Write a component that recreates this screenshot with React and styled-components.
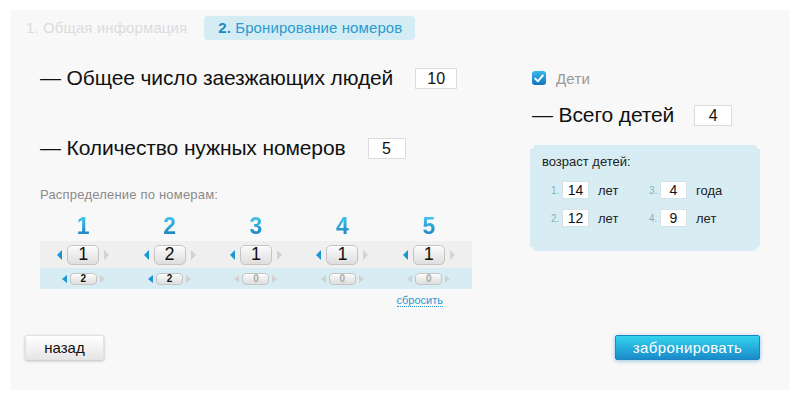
import React from 'react';
import styled, { createGlobalStyle } from 'styled-components';

const GlobalStyle = createGlobalStyle`
    body {
        margin: 0;
        background: #ffffff;
        font-family: "Liberation Sans", Arial, sans-serif;
    }
`;

const rooms = [
    { adults: 1, kids: 2, kidsOn: true },
    { adults: 2, kids: 2, kidsOn: true },
    { adults: 1, kids: 0, kidsOn: false },
    { adults: 1, kids: 0, kidsOn: false },
    { adults: 1, kids: 0, kidsOn: false },
];

const ages = [
    { n: 1, age: 14, word: 'лет' },
    { n: 3, age: 4, word: 'года' },
    { n: 2, age: 12, word: 'лет' },
    { n: 4, age: 9, word: 'лет' },
];

const Stepper = ({ value, small, active }) => (
    <StepperWrap $small={small}>
        <Arrow $dir="left" $active={active} $small={small} />
        <Pill $small={small} $active={active}>{value}</Pill>
        <Arrow $dir="right" $small={small} />
    </StepperWrap>
);

const App = () => {
    return (
        <>
            <GlobalStyle />
            <Panel>
                <Tabs>
                    <Tab>1. Общая информация</Tab>
                    <Tab $active><b>2.</b> Бронирование номеров</Tab>
                </Tabs>
                <Columns>
                    <Left>
                        <Question>
                            <QText>— Общее число заезжающих людей</QText>
                            <Field $w={40}>10</Field>
                        </Question>
                        <Question $gap={46}>
                            <QText>— Количество нужных номеров</QText>
                            <Field $w={36}>5</Field>
                        </Question>
                        <Caption>Распределение по номерам:</Caption>
                        <Table>
                            {rooms.map((r, i) => (
                                <RoomNum key={i}>{i + 1}</RoomNum>
                            ))}
                            {rooms.map((r, i) => (
                                <Cell key={'a' + i} $row="adults">
                                    <Stepper value={r.adults} active />
                                </Cell>
                            ))}
                            {rooms.map((r, i) => (
                                <Cell key={'k' + i} $row="kids">
                                    <Stepper value={r.kids} small active={r.kidsOn} />
                                </Cell>
                            ))}
                        </Table>
                        <ResetRow>
                            <Reset>сбросить</Reset>
                        </ResetRow>
                    </Left>
                    <Right>
                        <CheckRow>
                            <Check>
                                <svg width="10" height="9" viewBox="0 0 10 9">
                                    <path d="M1.2 4.6 L3.9 7.3 L8.8 1.4" fill="none" stroke="#fff" strokeWidth="2" strokeLinecap="round" strokeLinejoin="round" />
                                </svg>
                            </Check>
                            <CheckLabel>Дети</CheckLabel>
                        </CheckRow>
                        <Question $gap={18} $space={20}>
                            <QText>— Всего детей</QText>
                            <Field $w={36}>4</Field>
                        </Question>
                        <AgesBox>
                            <AgesTitle>возраст детей:</AgesTitle>
                            <AgesGrid>
                                {ages.map((a) => (
                                    <AgeItem key={a.n}>
                                        <AgeNum>{a.n}.</AgeNum>
                                        <AgeField>{a.age}</AgeField>
                                        <AgeWord>{a.word}</AgeWord>
                                    </AgeItem>
                                ))}
                            </AgesGrid>
                        </AgesBox>
                    </Right>
                </Columns>
                <Footer>
                    <BackButton>назад</BackButton>
                    <BookButton>забронировать</BookButton>
                </Footer>
            </Panel>
        </>
    );
};

export default App;

const Panel = styled.div`
    margin: 10px;
    width: 780px;
    height: 380px;
    background: #f8f8f8;
    display: flex;
    flex-direction: column;
`;

const Tabs = styled.div`
    display: flex;
    align-items: center;
    margin-top: 6px;
    padding-left: 16px;
    gap: 17px;
`;

const Tab = styled.div`
    height: 24px;
    line-height: 24px;
    font-size: 15px;
    letter-spacing: 0.1px;
    padding: ${p => (p.$active ? '0 13px 0 14px' : '0')};
    border-radius: 4px;
    color: ${p => (p.$active ? '#2a9bd1' : '#dcdcdc')};
    background: ${p => (p.$active ? '#d4ecf4' : 'transparent')};
    b {
        color: #1f8ac2;
    }
`;

const Columns = styled.div`
    display: flex;
    padding-left: 30px;
`;

const Left = styled.div`
    width: 490px;
    display: flex;
    flex-direction: column;
`;

const Right = styled.div`
    width: 230px;
    display: flex;
    flex-direction: column;
    padding-left: 2px;
`;

const Question = styled.div`
    display: flex;
    align-items: center;
    gap: ${p => p.$space || 22}px;
    margin-top: ${p => (p.$gap !== undefined ? p.$gap : 26)}px;
    height: 24px;
`;

const QText = styled.span`
    font-size: 21px;
    letter-spacing: -0.12px;
    color: #111;
`;

const Field = styled.div`
    width: ${p => p.$w}px;
    height: 19px;
    box-sizing: content-box;
    background: #fff;
    border: 1px solid #dcdcdc;
    font-size: 16px;
    line-height: 19px;
    text-align: center;
    color: #111;
`;

const Caption = styled.div`
    margin-top: 27px;
    font-size: 13px;
    letter-spacing: 0.2px;
    color: #8a8a8a;
    line-height: 15px;
`;

const Table = styled.div`
    width: 432px;
    margin-top: 8px;
    display: grid;
    grid-template-columns: repeat(5, 1fr);
`;

const RoomNum = styled.div`
    text-align: center;
    font-size: 23px;
    font-weight: bold;
    line-height: 26px;
    height: 28px;
    padding-top: 3px;
    background: linear-gradient(#3fc3ea 25%, #1778bd 90%);
    -webkit-background-clip: text;
    background-clip: text;
    color: transparent;
`;

const Cell = styled.div`
    display: flex;
    justify-content: center;
    align-items: center;
    height: ${p => (p.$row === 'adults' ? 27 : 21)}px;
    background: ${p => (p.$row === 'adults' ? '#efefef' : '#d8edf3')};
`;

const StepperWrap = styled.div`
    display: flex;
    align-items: center;
    gap: ${p => (p.$small ? 3 : 5)}px;
`;

const Arrow = styled.span`
    width: 0;
    height: 0;
    border-top: ${p => (p.$small ? 4 : 5)}px solid transparent;
    border-bottom: ${p => (p.$small ? 4 : 5)}px solid transparent;
    ${p => (p.$dir === 'left' ? 'border-right' : 'border-left')}: 5px solid
        ${p => (p.$active ? '#1b96d4' : '#d2d2d2')};
`;

const Pill = styled.span`
    width: ${p => (p.$small ? 27 : 32)}px;
    height: ${p => (p.$small ? 12 : 20)}px;
    box-sizing: border-box;
    border: 1px solid #c4c4c4;
    border-radius: ${p => (p.$small ? 4 : 5)}px;
    background: linear-gradient(#fbfbfb, #dedede);
    display: flex;
    align-items: center;
    justify-content: center;
    font-size: ${p => (p.$small ? 10 : 18)}px;
    font-weight: ${p => (p.$small ? 'bold' : 'normal')};
    color: ${p => (p.$small && !p.$active ? '#aaaaaa' : '#111')};
    box-shadow: inset 0 1px 0 #fff;
`;

const ResetRow = styled.div`
    width: 403px;
    display: flex;
    justify-content: flex-end;
    margin-top: 5px;
`;

const Reset = styled.span`
    font-size: 11px;
    color: #2a98d0;
    border-bottom: 1px dotted #2a98d0;
    line-height: 12px;
`;

const CheckRow = styled.div`
    display: flex;
    align-items: center;
    gap: 10px;
    margin-top: 31px;
    height: 14px;
`;

const Check = styled.span`
    width: 14px;
    height: 14px;
    border-radius: 3px;
    background: linear-gradient(#3ab8ea, #1174bd);
    display: flex;
    align-items: center;
    justify-content: center;
`;

const CheckLabel = styled.span`
    font-size: 15px;
    letter-spacing: 0.2px;
    color: #999;
`;

const AgesBox = styled.div`
    margin-top: 18px;
    margin-left: -2px;
    width: 230px;
    height: 106px;
    box-sizing: border-box;
    padding: 10px 12px;
    background:
        radial-gradient(circle at 0 0, transparent 4px, #d8edf3 4.5px) top left / 51% 51% no-repeat,
        radial-gradient(circle at 100% 0, transparent 4px, #d8edf3 4.5px) top right / 51% 51% no-repeat,
        radial-gradient(circle at 0 100%, transparent 4px, #d8edf3 4.5px) bottom left / 51% 51% no-repeat,
        radial-gradient(circle at 100% 100%, transparent 4px, #d8edf3 4.5px) bottom right / 51% 51% no-repeat;
`;

const AgesTitle = styled.div`
    font-size: 13px;
    color: #222;
    line-height: 14px;
`;

const AgesGrid = styled.div`
    display: grid;
    grid-template-columns: 98px 98px;
    row-gap: 10px;
    margin-top: 12px;
    padding-left: 9px;
`;

const AgeItem = styled.div`
    display: flex;
    align-items: center;
`;

const AgeNum = styled.span`
    width: 11px;
    font-size: 10px;
    color: #87aebb;
`;

const AgeField = styled.span`
    width: 27px;
    height: 18px;
    box-sizing: border-box;
    border: 1px solid #d4e2e6;
    background: #fff;
    font-size: 14px;
    line-height: 16px;
    text-align: center;
    color: #111;
`;

const AgeWord = styled.span`
    margin-left: 9px;
    font-size: 13px;
    color: #222;
`;

const Footer = styled.div`
    display: flex;
    justify-content: space-between;
    margin-top: auto;
    margin-bottom: 30px;
    padding: 0 30px 0 15px;
`;

const BackButton = styled.div`
    width: 79px;
    height: 25px;
    box-sizing: border-box;
    border: 1px solid #e2e2e2;
    border-radius: 2px;
    background: linear-gradient(#ffffff, #e6e6e6);
    box-shadow: 0 1px 3px rgba(0, 0, 0, 0.25);
    font-size: 15px;
    line-height: 23px;
    text-align: center;
    color: #111;
`;

const BookButton = styled.div`
    width: 145px;
    height: 25px;
    box-sizing: border-box;
    border: 1px solid #1c86c4;
    border-radius: 2px;
    background: linear-gradient(#34d3ec, #1a8bca);
    box-shadow: 0 1px 4px rgba(30, 130, 200, 0.45);
    font-size: 15px;
    letter-spacing: 0.4px;
    line-height: 23px;
    text-align: center;
    color: #fff;
`;
